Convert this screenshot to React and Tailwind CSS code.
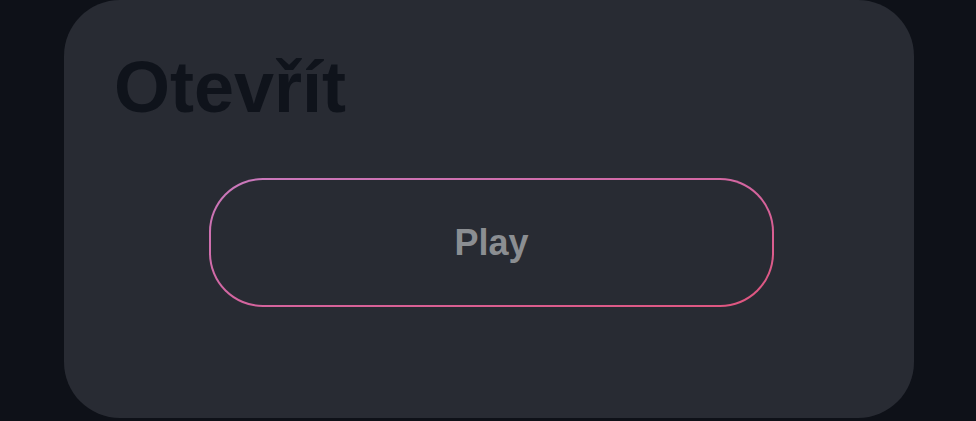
import React from 'react';

const App = () => {
  return (
    <div className="w-[976px] h-[421px] bg-[#0e1118] flex overflow-hidden">
      {/* Card */}
      <div className="ml-[64px] w-[850px] h-[418px] bg-[#282b33] rounded-[56px] px-[50px] pt-[51px] font-['Liberation_Sans',Arial,sans-serif]">
        <h1 className="text-[72px] leading-none font-bold text-[#0f131b]">Otevřít</h1>

        {/* Play button with gradient border */}
        <div className="mt-[55px] ml-[95px] w-[565px] h-[129px] rounded-[54px] p-[2px] bg-gradient-to-br from-[#c979bd] via-[#d465a0] to-[#e0557e]">
          <button className="w-full h-full rounded-[52px] bg-[#282b33] flex items-center justify-center text-[36px] font-bold text-[#8b8e92]">
            Play
          </button>
        </div>
      </div>
    </div>
  );
};

export default App;
